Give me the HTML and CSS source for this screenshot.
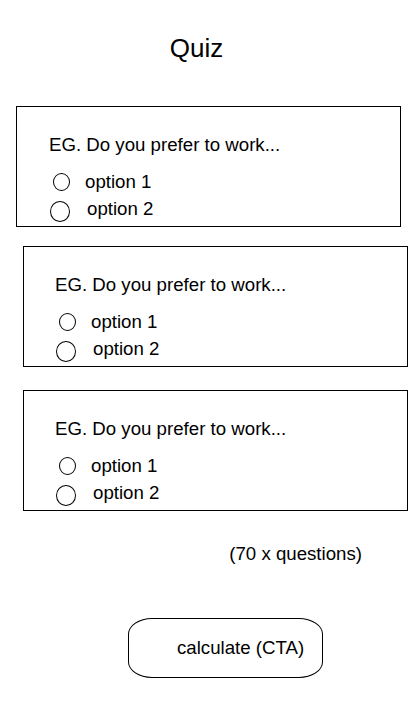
FILE: index.html
```html
<!DOCTYPE html>
<html lang="en">
<head>
    <meta charset="UTF-8">
    <meta name="viewport" content="width=device-width, initial-scale=1.0">
    <title>Quiz</title>
    <link rel="stylesheet" href="styles.css">
</head>
<body>
    <div class="page">
        <h1 class="title">Quiz</h1>

        <div class="card">
            <p class="question">EG. Do you prefer to work...</p>
            <div class="options">
                <label class="option"><span class="radio"></span>option 1</label>
                <label class="option second"><span class="radio"></span>option 2</label>
            </div>
        </div>

        <div class="card shifted">
            <p class="question">EG. Do you prefer to work...</p>
            <div class="options">
                <label class="option"><span class="radio"></span>option 1</label>
                <label class="option second"><span class="radio"></span>option 2</label>
            </div>
        </div>

        <div class="card shifted last">
            <p class="question">EG. Do you prefer to work...</p>
            <div class="options">
                <label class="option"><span class="radio"></span>option 1</label>
                <label class="option second"><span class="radio"></span>option 2</label>
            </div>
        </div>

        <p class="count">(70 x questions)</p>

        <button class="cta">calculate (CTA)</button>
    </div>
</body>
</html>
```

FILE: styles.css
```css
body {
    margin: 0;
    background-color: #fff;
    color: #000;
    font-family: "Liberation Sans", Arial, sans-serif;
}
.page {
    padding-top: 33px;
}
.title {
    margin: 0 0 43px;
    padding-right: 26px;
    font-size: 26px;
    font-weight: normal;
    line-height: 30px;
    text-align: center;
}
.card {
    box-sizing: border-box;
    width: 385px;
    height: 121px;
    margin-left: 16px;
    padding: 28px 0 0 32px;
    border: 1px solid #000;
}
.card.shifted {
    margin-left: 23px;
    margin-top: 19px;
    padding-left: 31px;
}
.card.last {
    margin-top: 23px;
}
.question {
    margin: 0;
    font-size: 18.67px;
    line-height: 20px;
}
.options {
    display: flex;
    flex-direction: column;
    gap: 7px;
    margin-top: 17px;
}
.option {
    display: flex;
    align-items: center;
    height: 20px;
    font-size: 18.67px;
    line-height: 20px;
}
.radio {
    box-sizing: border-box;
    width: 17px;
    height: 18px;
    margin: 0 15px 0 4px;
    border: 1px solid #000;
    border-radius: 50%;
}
.option.second .radio {
    width: 20px;
    height: 21px;
    margin: 4px 17px 0 1px;
}
.count {
    margin: 33px 57px 0 0;
    font-size: 18.67px;
    line-height: 20px;
    text-align: right;
}
.cta {
    display: block;
    box-sizing: border-box;
    width: 195px;
    height: 60px;
    margin: 54px 0 0 128px;
    padding: 0 0 0 48px;
    border: 1px solid #000;
    border-radius: 24px / 16px;
    background: #fff;
    color: #000;
    font-family: "Liberation Sans", Arial, sans-serif;
    font-size: 18.67px;
    text-align: left;
}
```
